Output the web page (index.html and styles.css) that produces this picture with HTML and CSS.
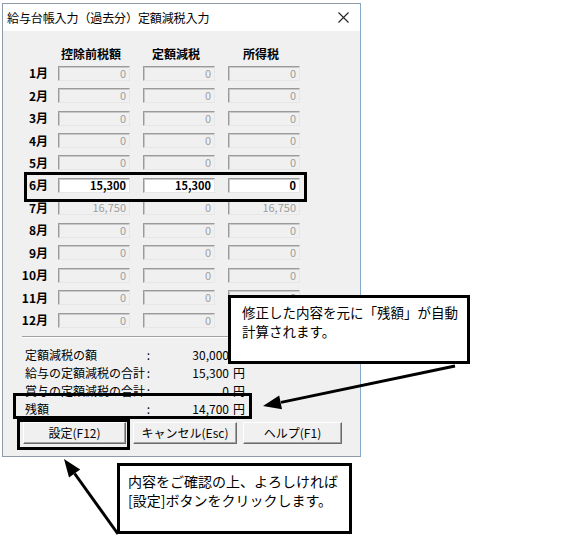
FILE: index.html
```html
<!DOCTYPE html>
<html lang="ja">
<head>
<meta charset="utf-8">
<title>定額減税入力</title>
<link rel="stylesheet" href="styles.css">
</head>
<body>
<div class="dialog">
  <div class="titlebar">
    <span class="title">給与台帳入力（過去分）定額減税入力</span>
    <svg class="close" width="11" height="11" viewBox="0 0 11 11"><path d="M0.5 0.5 L10.5 10.5 M10.5 0.5 L0.5 10.5" stroke="#222" stroke-width="1.1" fill="none"/></svg>
  </div>
  <div class="body">
    <div class="head-row">
      <span class="lbl"></span>
      <div class="cells">
        <span class="hd">控除前税額</span>
        <span class="hd">定額減税</span>
        <span class="hd">所得税</span>
      </div>
    </div>
    <div class="rows">
      <div class="row"><span class="lbl">1月</span><div class="cells"><span class="box">0</span><span class="box">0</span><span class="box">0</span></div></div>
      <div class="row"><span class="lbl">2月</span><div class="cells"><span class="box">0</span><span class="box">0</span><span class="box">0</span></div></div>
      <div class="row"><span class="lbl">3月</span><div class="cells"><span class="box">0</span><span class="box">0</span><span class="box">0</span></div></div>
      <div class="row"><span class="lbl">4月</span><div class="cells"><span class="box">0</span><span class="box">0</span><span class="box">0</span></div></div>
      <div class="row"><span class="lbl">5月</span><div class="cells"><span class="box">0</span><span class="box">0</span><span class="box">0</span></div></div>
      <div class="row"><span class="lbl">6月</span><div class="cells"><span class="box on">15,300</span><span class="box on">15,300</span><span class="box on">0</span></div></div>
      <div class="row"><span class="lbl">7月</span><div class="cells"><span class="box">16,750</span><span class="box">0</span><span class="box">16,750</span></div></div>
      <div class="row"><span class="lbl">8月</span><div class="cells"><span class="box">0</span><span class="box">0</span><span class="box">0</span></div></div>
      <div class="row"><span class="lbl">9月</span><div class="cells"><span class="box">0</span><span class="box">0</span><span class="box">0</span></div></div>
      <div class="row"><span class="lbl">10月</span><div class="cells"><span class="box">0</span><span class="box">0</span><span class="box">0</span></div></div>
      <div class="row"><span class="lbl">11月</span><div class="cells"><span class="box">0</span><span class="box">0</span><span class="box">0</span></div></div>
      <div class="row"><span class="lbl">12月</span><div class="cells"><span class="box">0</span><span class="box">0</span><span class="box">0</span></div></div>
    </div>
    <div class="sep"></div>
    <div class="summary">
      <div class="sum-row"><span class="s-lbl">定額減税の額</span><span class="s-colon">:</span><span class="s-val">30,000</span><span class="s-unit">円</span></div>
      <div class="sum-row"><span class="s-lbl">給与の定額減税の合計</span><span class="s-colon">:</span><span class="s-val">15,300</span><span class="s-unit">円</span></div>
      <div class="sum-row"><span class="s-lbl">賞与の定額減税の合計</span><span class="s-colon">:</span><span class="s-val">0</span><span class="s-unit">円</span></div>
      <div class="sum-row"><span class="s-lbl">残額</span><span class="s-colon">:</span><span class="s-val">14,700</span><span class="s-unit">円</span></div>
    </div>
    <div class="buttons">
      <button class="btn btn-ok">設定(F12)</button>
      <button class="btn btn-cancel">キャンセル(Esc)</button>
      <button class="btn btn-help">ヘルプ(F1)</button>
    </div>
  </div>
</div>

<div class="hl hl-june"></div>
<div class="hl hl-rest"></div>
<div class="hl hl-btn"></div>

<svg class="arrows" width="577" height="555" viewBox="0 0 577 555">
  <line x1="455" y1="366" x2="281" y2="402.4" stroke="#000" stroke-width="3"/>
  <polygon points="263,406 282,409.3 279.2,395.5" fill="#000"/>
  <line x1="118" y1="534" x2="74.6" y2="473.5" stroke="#000" stroke-width="3"/>
  <polygon points="64,459 80.2,469.4 69,477.6" fill="#000"/>
</svg>

<div class="callout callout-1">修正した内容を元に「残額」が自動<br>計算されます。</div>
<div class="callout callout-2">内容をご確認の上、よろしければ<br>[設定]ボタンをクリックします。</div>
</body>
</html>
```

FILE: styles.css
```css
html, body {
  margin: 0;
  padding: 0;
}
body {
  position: relative;
  width: 577px;
  height: 555px;
  overflow: hidden;
  background: #fff;
  font-family: "Noto Sans CJK JP", "Noto Sans", sans-serif;
  color: #000;
}

.dialog {
  margin: 3px 0 0 2px;
  width: 359px;
  height: 454px;
  box-sizing: border-box;
  border: 1px solid #8f9ba8;
  border-right-color: #86a9c8;
  background: #f0f0f0;
  display: flex;
  flex-direction: column;
}

.titlebar {
  height: 27px;
  flex: none;
  background: #fff;
  display: flex;
  align-items: center;
  justify-content: space-between;
  padding: 0 11px 0 4px;
}
.title {
  font-size: 12px;
  line-height: 16px;
  letter-spacing: -0.1px;
}
.close {
  display: block;
}

.body {
  flex: 1;
  padding-top: 14px;
}

.head-row {
  display: flex;
  height: 17px;
  line-height: 17px;
  font-size: 12px;
  font-weight: bold;
}
.lbl {
  width: 55px;
  flex: none;
  box-sizing: border-box;
  padding-right: 10px;
  text-align: right;
  font-size: 12px;
  font-weight: bold;
}
.cells {
  display: flex;
  gap: 13px;
}
.hd {
  width: 72px;
  box-sizing: border-box;
  padding-right: 6px;
  text-align: center;
  white-space: nowrap;
}

.rows {
  display: flex;
  flex-direction: column;
}
.row {
  display: flex;
  align-items: center;
  height: 22.45px;
}
.row .lbl {
  line-height: 16px;
}
.box {
  width: 72px;
  height: 15px;
  box-sizing: border-box;
  border: 1px solid;
  border-color: #9b9b9b #e6e6e6 #e6e6e6 #9b9b9b;
  box-shadow: inset 1px 1px 0 #c9c9c9;
  background: #f0f0f0;
  color: #9e9e9e;
  font-size: 11px;
  line-height: 13px;
  text-align: right;
  padding-right: 3px;
  white-space: nowrap;
}
.box.on {
  background: #fff;
  color: #000;
  font-weight: bold;
}

.sep {
  margin: 5px 18px 0 19px;
  height: 0;
  border-top: 1px solid #a0a0a0;
  border-bottom: 1px solid #fff;
}

.summary {
  margin-top: 8px;
  padding-left: 22px;
}
.sum-row {
  display: flex;
  height: 18px;
  line-height: 18px;
  font-size: 12px;
}
.s-lbl {
  width: 120px;
  white-space: nowrap;
}
.s-colon {
  width: 7px;
  text-align: center;
}
.s-val {
  width: 77px;
  text-align: right;
}
.s-unit {
  margin-left: 4px;
}

.buttons {
  display: flex;
  margin-top: 4px;
  padding-left: 20px;
}
.btn {
  height: 22px;
  box-sizing: border-box;
  margin: 0;
  padding: 0;
  border: 1px solid;
  border-color: #fff #6b6b6b #6b6b6b #fff;
  box-shadow: inset -1px -1px 0 #a3a3a3;
  background: #f0f0f0;
  font-family: "Noto Sans CJK JP", "Noto Sans", sans-serif;
  font-size: 12px;
  line-height: 18px;
  color: #000;
}
.btn-ok { width: 103px; }
.btn-cancel { width: 104px; margin-left: 7px; }
.btn-help { width: 99px; margin-left: 6px; }

.hl {
  position: absolute;
  box-sizing: border-box;
  border: 3px solid #000;
}
.hl-june { left: 24px; top: 172px; width: 283px; height: 30px; }
.hl-rest { left: 13px; top: 393px; width: 239px; height: 26px; }
.hl-btn { left: 17px; top: 419px; width: 113px; height: 31px; }

.arrows {
  position: absolute;
  left: 0;
  top: 0;
  pointer-events: none;
}

.callout {
  position: absolute;
  box-sizing: border-box;
  border: 3px solid #000;
  background: #fff;
  font-size: 13.5px;
  line-height: 19px;
  white-space: nowrap;
  font-family: "Noto Sans CJK JP", sans-serif;
}
.callout-1 {
  left: 228px;
  top: 295px;
  width: 242px;
  height: 69px;
  padding: 5px 0 0 11px;
}
.callout-2 {
  left: 117px;
  top: 463px;
  width: 235px;
  height: 71px;
  padding: 6px 0 0 8px;
  font-size: 14px;
}
```
